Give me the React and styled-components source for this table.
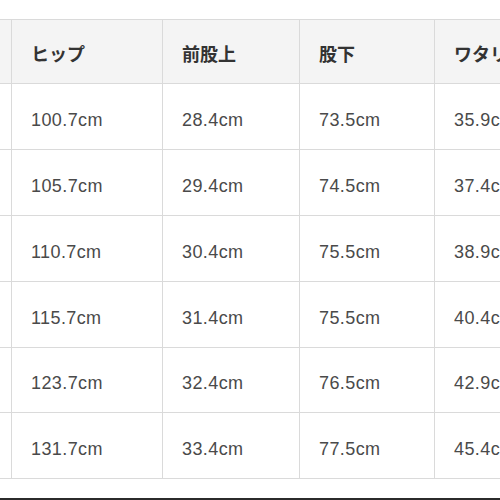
import React from 'react'
import styled, { createGlobalStyle } from 'styled-components'

const GlobalStyle = createGlobalStyle`
    html, body {
        margin: 0;
        padding: 0;
        background: #fff;
    }
    body {
        font-family: "Liberation Sans", "Noto Sans CJK JP", sans-serif;
    }
`

const Frame = styled.div`
    width: 500px;
    height: 500px;
    overflow: hidden;
    display: flex;
    flex-direction: column;
    padding-top: 19px;
    box-sizing: border-box;
`

const SizeGrid = styled.div`
    display: grid;
    grid-template-columns: 140px 151px 137px 135px 150px;
    grid-template-rows: 64px 66px 66px 66px 66px 65px 66px;
    margin-left: -128px;
    border-top: 1px solid #dadada;
    flex-shrink: 0;
`

const Cell = styled.div`
    box-sizing: border-box;
    display: flex;
    align-items: center;
    padding-left: 19px;
    padding-top: ${p => (p.$head ? '2px' : '7px')};
    border-right: 1px solid #dadada;
    border-bottom: 1px solid #dadada;
    background: ${p => (p.$head ? '#f4f4f4' : '#fff')};
    color: ${p => (p.$head ? '#333' : '#4a4a4a')};
    font-size: 18px;
    font-weight: ${p => (p.$head ? 700 : 400)};
    letter-spacing: ${p => (p.$head ? '0' : '0.4px')};
    white-space: nowrap;
    overflow: hidden;
`

const Spacer = styled.div`
    flex: 1;
`

const BottomBar = styled.div`
    height: 2px;
    background: #2b2b2b;
    flex-shrink: 0;
`

const headers = ['', 'ヒップ', '前股上', '股下', 'ワタリ']

const rows = [
    ['', '100.7cm', '28.4cm', '73.5cm', '35.9cm'],
    ['', '105.7cm', '29.4cm', '74.5cm', '37.4cm'],
    ['', '110.7cm', '30.4cm', '75.5cm', '38.9cm'],
    ['', '115.7cm', '31.4cm', '75.5cm', '40.4cm'],
    ['', '123.7cm', '32.4cm', '76.5cm', '42.9cm'],
    ['', '131.7cm', '33.4cm', '77.5cm', '45.4cm'],
]

const App = () => {
    return (
        <>
            <GlobalStyle />
            <Frame>
                <SizeGrid>
                    {headers.map((h, i) => <Cell $head key={'h' + i}>{h}</Cell>)}
                    {rows.map((r, ri) =>
                        r.map((v, ci) => <Cell key={ri + '-' + ci}>{v}</Cell>)
                    )}
                </SizeGrid>
                <Spacer />
                <BottomBar />
            </Frame>
        </>
    )
}

export default App
